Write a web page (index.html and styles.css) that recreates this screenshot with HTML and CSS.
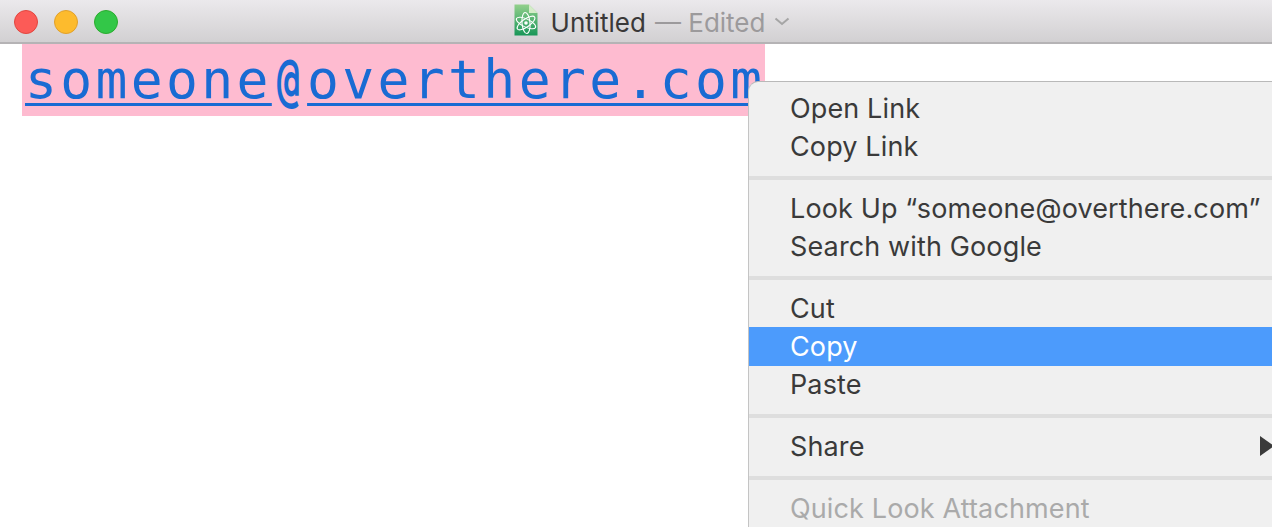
FILE: index.html
```html
<!DOCTYPE html>
<html lang="en">
<head>
<meta charset="utf-8">
<title>Untitled</title>
<link rel="stylesheet" href="styles.css">
</head>
<body>
<div class="window">
  <header class="titlebar">
    <div class="lights">
      <span class="light red"></span>
      <span class="light yellow"></span>
      <span class="light green"></span>
    </div>
    <div class="title">
      <svg class="docicon" width="24" height="32" viewBox="0 0 24 32">
        <defs>
          <linearGradient id="doc" x1="0" y1="0" x2="0" y2="1">
            <stop offset="0" stop-color="#93d08c"/>
            <stop offset="1" stop-color="#189658"/>
          </linearGradient>
        </defs>
        <path d="M0.5 0.5H15L23.5 9V31.5H0.5Z" fill="url(#doc)"/>
        <path d="M15 0.5L23.5 9H15Z" fill="#d4ecc8"/>
        <g fill="none" stroke="#fff" stroke-width="1.1">
          <ellipse cx="12" cy="19" rx="10.5" ry="4" transform="rotate(25 12 19)"/>
          <ellipse cx="12" cy="19" rx="10.5" ry="4" transform="rotate(-35 12 19)"/>
          <ellipse cx="12" cy="19" rx="10.5" ry="4" transform="rotate(85 12 19)"/>
        </g>
        <circle cx="12" cy="19" r="1.8" fill="#fff"/>
      </svg>
      <span class="name">Untitled</span>
      <span class="edited">— Edited</span>
      <svg class="chevron" width="16" height="9" viewBox="0 0 16 9">
        <path d="M1.5 1.5L8 7L14.5 1.5" fill="none" stroke="#a5a5a5" stroke-width="2"/>
      </svg>
    </div>
  </header>
  <main class="document">
    <a class="link" href="#">someone<span class="at">@</span>overthere.com</a>
  </main>
  <nav class="menu">
    <div class="item">Open Link</div>
    <div class="item">Copy Link</div>
    <div class="sep"></div>
    <div class="item">Look Up “someone@overthere.com”</div>
    <div class="item">Search with Google</div>
    <div class="sep"></div>
    <div class="item">Cut</div>
    <div class="item active">Copy</div>
    <div class="item">Paste</div>
    <div class="sep"></div>
    <div class="item">Share<span class="arrow"></span></div>
    <div class="sep"></div>
    <div class="item disabled">Quick Look Attachment</div>
  </nav>
</div>
</body>
</html>
```
FILE: styles.css
```css
* { box-sizing: border-box; }
html, body { margin: 0; height: 100%; overflow: hidden; background: #fff; }
.window { position: relative; width: 1272px; height: 532px; overflow: hidden; background: #fff; }
.titlebar {
  position: relative;
  height: 44px;
  display: flex;
  align-items: center;
  justify-content: center;
  background: linear-gradient(#ebe9ec, #d2d0d2);
  border-bottom: 2px solid #b5b3b5;
}
.lights { position: absolute; left: 14px; top: 10px; display: flex; gap: 16px; }
.light { width: 24px; height: 24px; border-radius: 50%; border: 1px solid; }
.red { background: #fc5b57; border-color: #e2463f; }
.yellow { background: #fdbb2d; border-color: #e1a02b; }
.green { background: #33c748; border-color: #2bac2e; }
.title {
  display: flex;
  align-items: center;
  font: 26px "Inter", "Liberation Sans", sans-serif;
  margin-left: 32px;
  margin-top: 2px;
}
.docicon { margin-right: 13px; margin-top: -4px; }
.name { color: #3a3838; margin-right: 9px; }
.edited { color: #9c9a9c; }
.chevron { margin-left: 9px; margin-top: -2px; }
.document { padding-left: 22px; }
.link {
  display: inline-block;
  height: 72px;
  line-height: 72px;
  padding-left: 3px;
  background: #febbd0;
  color: #196bd3;
  font-family: "DejaVu Sans Mono", monospace;
  font-size: 53px;
  letter-spacing: 3.35px;
  text-decoration: underline;
  text-decoration-thickness: 3px;
  text-underline-offset: 5px;
  white-space: nowrap;
}
.at {
  display: inline-block;
  transform: scale(0.72, 1.1);
  font-weight: 700;
}
.menu {
  position: absolute;
  left: 748px;
  top: 81px;
  width: 540px;
  padding-top: 7px;
  background: #f0f0f0;
  border-top: 1px solid #b9b9b9;
  border-left: 1px solid #c4c4c4;
  border-top-left-radius: 10px;
  font: 27px "Inter", "Liberation Sans", sans-serif;
  letter-spacing: 0.13px;
  color: #3a3a3a;
}
.item {
  height: 38px;
  line-height: 40px;
  padding-left: 41px;
  position: relative;
  white-space: nowrap;
}
.active { height: 39px; margin-bottom: -1px; background: #4c9bfc; color: #fff; }
.disabled { color: #aaa; }
.sep { height: 24px; padding: 11px 0 9px; }
.sep::before { content: ""; display: block; height: 4px; background: #dedede; }
.arrow {
  position: absolute;
  left: 511px;
  top: 9px;
  border-left: 14px solid #3a3a3a;
  border-top: 10px solid transparent;
  border-bottom: 10px solid transparent;
}
```
